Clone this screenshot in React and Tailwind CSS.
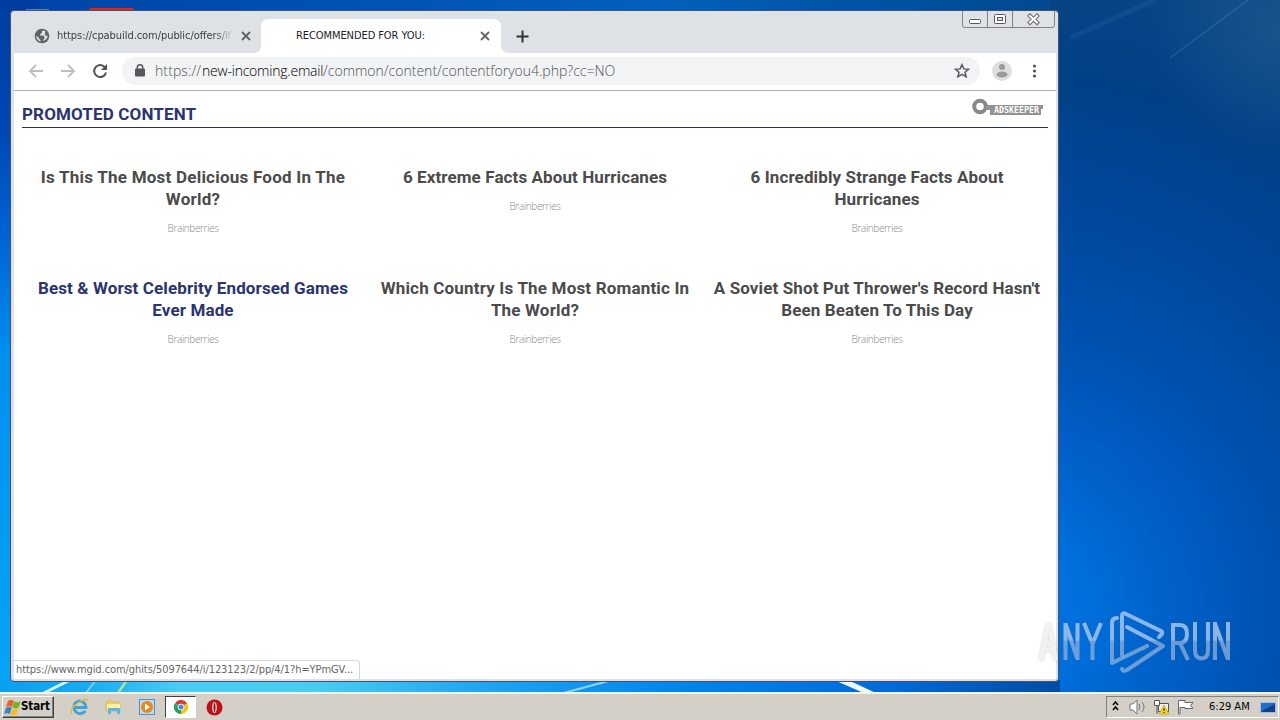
import React from "react";

const TAHOMA = "font-['DejaVu_Sans_Condensed','DejaVu_Sans',sans-serif] [font-stretch:condensed]";

function Wallpaper() {
  return (
    <svg className="absolute inset-0" width="1280" height="720" viewBox="0 0 1280 720">
      <defs>
        <linearGradient id="left" x1="0" y1="0" x2="0" y2="1">
          <stop offset="0" stopColor="#003da0" />
          <stop offset="0.18" stopColor="#0046b4" />
          <stop offset="0.35" stopColor="#0068d8" />
          <stop offset="0.5" stopColor="#0090f0" />
          <stop offset="1" stopColor="#08a6f8" />
        </linearGradient>
        <linearGradient id="top" x1="0" y1="0" x2="1" y2="0">
          <stop offset="0" stopColor="#0044a8" />
          <stop offset="0.5" stopColor="#0060ba" />
          <stop offset="0.82" stopColor="#00488f" />
          <stop offset="1" stopColor="#0d477f" />
        </linearGradient>
        <radialGradient id="right" gradientUnits="userSpaceOnUse" cx="1000" cy="610" r="640">
          <stop offset="0" stopColor="#0078e8" />
          <stop offset="0.14" stopColor="#006edb" />
          <stop offset="0.3" stopColor="#005dc4" />
          <stop offset="0.45" stopColor="#0050ad" />
          <stop offset="0.68" stopColor="#004699" />
          <stop offset="0.84" stopColor="#004085" />
          <stop offset="1" stopColor="#084585" />
        </radialGradient>
        <radialGradient id="corner" gradientUnits="userSpaceOnUse" cx="1280" cy="30" r="130">
          <stop offset="0" stopColor="#2a6696" stopOpacity=".45" />
          <stop offset="1" stopColor="#2a6696" stopOpacity="0" />
        </radialGradient>
        <linearGradient id="bottom" x1="0" y1="0" x2="1" y2="0">
          <stop offset="0" stopColor="#08a0f0" />
          <stop offset="0.08" stopColor="#16acf4" />
          <stop offset="0.17" stopColor="#4accf4" />
          <stop offset="0.3" stopColor="#48cdf2" />
          <stop offset="0.45" stopColor="#20a6f2" />
          <stop offset="0.65" stopColor="#0083ee" />
          <stop offset="0.84" stopColor="#006ada" />
          <stop offset="1" stopColor="#004ca4" />
        </linearGradient>
      </defs>
      <rect width="1280" height="720" fill="url(#left)" />
      <rect x="40" width="1240" height="12" fill="url(#top)" />
      <rect x="1050" width="230" height="720" fill="url(#right)" />
      <rect x="1100" width="180" height="170" fill="url(#corner)" />
      <rect y="680" width="1060" height="14" fill="url(#bottom)" />
      <path d="M1170 58 L1248 0" stroke="#5b93c4" strokeWidth="1.5" opacity=".3" />
      <path d="M1070 38 L1155 0" stroke="#4f8cc4" strokeWidth="5" opacity=".12" />
      <path d="M44 693 L70 680" stroke="#d8f4f0" strokeWidth="3" />
      <path d="M86 693 L96 680" stroke="#8ed9ec" strokeWidth="1.5" />
      <path d="M118 693 L127 680" stroke="#a7e89a" strokeWidth="2.5" />
      <path d="M560 694 L612 680" stroke="#8bd8fb" strokeWidth="2" />
      <path d="M834 680H848L878 694H866Z" fill="#eefaff" />
      <rect x="89" y="8" width="45" height="5" rx="2" fill="#d42a22" />
      <rect x="26" y="9" width="23" height="2" fill="#5680bb" />
    </svg>
  );
}

function CloseX() {
  return (
    <svg width="10" height="10" viewBox="0 0 10 10">
      <path d="M1 1l8 8M9 1L1 9" stroke="#5f6368" strokeWidth="1.8" />
    </svg>
  );
}

function Globe() {
  return (
    <svg className="shrink-0" width="16" height="16" viewBox="0 0 16 16">
      <circle cx="8" cy="8" r="7.3" fill="#5f6368" />
      <path d="M9.5 2.2 8 3.2v1.5L6.2 6v1.6h3l1.5 1.5-.7 1.8L8.6 13c2.8-.4 4.9-2.4 5.1-5.2l-1.5.3-1.5-1.8.8-2.9zM2.3 7.5l2.8 2.4v1l1.5 1v1.6C4 13 2.2 10.9 2.3 7.5z" fill="#dee1e6" />
    </svg>
  );
}

function TabStrip() {
  return (
    <div className="flex h-[42px] bg-[#dee1e6] pl-[11px] pt-[8px]">
      <div className="flex h-[34px] w-[228px] items-center pl-[9px]">
        <Globe />
        <div className={"ml-[7px] h-4 w-[176px] whitespace-nowrap text-[11px] leading-4 tracking-[-0.06px] text-[#3c4043] [mask-image:linear-gradient(to_right,black_90%,transparent)] " + TAHOMA}>
          https://cpabuild.com/public/offers/if
        </div>
        <div className="ml-2 shrink-0"><CloseX /></div>
      </div>
      <div className="relative ml-[8px] h-[34px] w-[240px]">
        <svg className="absolute -left-2 top-0" width="256" height="34" viewBox="0 0 256 34">
          <path d="M0 34q8 0 8-8V8q0-8 8-8h224q8 0 8 8v18q0 8 8 8z" fill="#fff" />
        </svg>
        <div className="relative flex h-full items-center pl-[35px]">
          <span className={"w-[176px] whitespace-nowrap text-[11px] tracking-[-0.08px] text-[#202124] " + TAHOMA}>RECOMMENDED FOR YOU:</span>
          <span className="ml-[8px]"><CloseX /></span>
        </div>
      </div>
      <svg className="ml-[15px] mt-[11px]" width="13" height="13" viewBox="0 0 13 13">
        <path d="M6.5 .5v12M.5 6.5h12" stroke="#303338" strokeWidth="2" />
      </svg>
    </div>
  );
}

function WindowButtons() {
  return (
    <svg className="absolute left-[950px] top-0" width="96" height="19" viewBox="0 0 96 19">
      <path d="M1.5 0v14q0 2.5 2.5 2.5h87q2.5 0 2.5-2.5V0M26.500 0v16M51.500 0v16" fill="none" stroke="#80838e" />
      <rect x="8.500" y="8.500" width="11" height="4" rx="1" fill="#fff" stroke="#555966" />
      <rect x="33.500" y="3.500" width="11" height="9" rx="1" fill="#fff" stroke="#555966" />
      <rect x="36.500" y="6.500" width="5" height="3" fill="#dee1e6" stroke="#555966" />
      <path d="M67.500 3.500l10 9.500M77.500 3.500l-10 9.500" stroke="#60646f" strokeWidth="4" />
      <path d="M68.200 4.200l8.600 8.100M76.800 4.200l-8.600 8.100" stroke="#fff" strokeWidth="2.200" />
    </svg>
  );
}

function Toolbar() {
  return (
    <div className="flex h-[38px] items-center border-b border-[#adb0b2] bg-white pb-[2px] pl-[14px]">
      <svg width="80" height="16" viewBox="0 0 80 16" fill="none">
        <path d="M15 8H2M8 2L2 8l6 6M33 8h13M40 2l6 6-6 6" stroke="#bcbec1" strokeWidth="1.8" />
        <path d="M76.800 4.200A6 6 0 1 0 78 9.500" stroke="#4f5357" strokeWidth="2" />
        <path d="M79 1v6h-6z" fill="#4f5357" />
      </svg>
      <div className="ml-[14px] flex h-7 w-[858px] items-center rounded-full bg-[#f1f3f4] pl-[13px]">
        <svg width="10" height="13" viewBox="0 0 10 13">
          <path d="M2.300 5.500V3.500a2.700 2.700 0 0 1 5.400 0v2" fill="none" stroke="#55595d" strokeWidth="1.500" />
          <rect y="4.500" width="10" height="8" rx="1" fill="#55595d" />
        </svg>
        <div className="ml-[10px] flex w-[790px] whitespace-nowrap font-['Open_Sans',sans-serif] text-[14px] font-light leading-5 text-[#50545a]">
          <span className="w-[47px] tracking-[0.1px]">https://</span>
          <span className="w-[121px] tracking-[-0.22px] text-black">new-incoming.email</span>
          <span className="tracking-[0px]">/common/content/contentforyou4.php?cc=NO</span>
        </div>
        <svg className="ml-[9px]" width="16" height="16" viewBox="0 0 16 16">
          <path d="M8 1.700l1.900 4.200 4.600.4-3.500 3 1.100 4.500L8 11.400l-4.100 2.400L5 9.300l-3.500-3 4.600-.4z" fill="none" stroke="#53575b" strokeWidth="1.500" />
        </svg>
      </div>
      <svg className="ml-[12px]" width="20" height="20" viewBox="0 0 20 20">
        <circle cx="10" cy="10" r="10" fill="#dedede" />
        <circle cx="10" cy="6" r="3" fill="#9a9a9a" />
        <ellipse cx="10" cy="13.500" rx="5.500" ry="3" fill="#9a9a9a" />
      </svg>
      <svg className="ml-[20px]" width="5" height="14" viewBox="0 0 5 14" fill="#4f5357">
        <circle cx="2.500" cy="2" r="1.600" /><circle cx="2.500" cy="7" r="1.600" /><circle cx="2.500" cy="12" r="1.600" />
      </svg>
    </div>
  );
}

const ARTICLES = [
  { lines: ["Is This The Most Delicious Food In The", "World?"], tracking: "tracking-[0.23px]" },
  { lines: ["6 Extreme Facts About Hurricanes"], tracking: "tracking-[0.1px]" },
  { lines: ["6 Incredibly Strange Facts About", "Hurricanes"], tracking: "tracking-[0.13px]" },
  { lines: ["Best & Worst Celebrity Endorsed Games", "Ever Made"], tracking: "tracking-[0.12px]", active: true },
  { lines: ["Which Country Is The Most Romantic In", "The World?"], tracking: "tracking-[0.18px]" },
  { lines: ["A Soviet Shot Put Thrower's Record Hasn't", "Been Beaten To This Day"], tracking: "tracking-[0.12px]" },
];

function Content() {
  return (
    <div className="relative h-[588px] bg-white px-2">
      <div className="flex h-[37px] items-start justify-between border-b border-[#2b3159]">
        <h1 className="mt-[13px] font-[Roboto,sans-serif] text-[17px] font-bold leading-5 tracking-[0.14px] text-[#2a3470]">PROMOTED CONTENT</h1>
        <svg className="mr-[4px] mt-[6px]" width="73" height="19" viewBox="0 0 73 19">
          <circle cx="9" cy="9.500" r="5.800" fill="none" stroke="#888" strokeWidth="4" />
          <path d="M15 8h57v4h-2v6H19v-5h-4z" fill="#929292" />
          <text x="23" y="16" fontFamily="DejaVu Sans Mono" fontWeight="bold" fontSize="8" fill="#fff" textLength="45" lengthAdjust="spacingAndGlyphs">ADSKEEPER</text>
        </svg>
      </div>
      <div className="grid grid-cols-3 pt-[38px]">
        {ARTICLES.map((a) => (
          <article key={a.lines[0]} className="h-[111px] text-center">
            <h2 className={"whitespace-nowrap font-[Roboto,sans-serif] text-[17px] font-bold leading-[22px] " + a.tracking + (a.active ? " text-[#2a3470]" : " text-[#4b4b4b]")}>
              {a.lines.map((l) => <span key={l} className="block">{l}</span>)}
            </h2>
            <p className="mt-[12px] font-['Open_Sans',sans-serif] text-[10px] font-light leading-3 tracking-[-0.36px] text-[#888]">Brainberries</p>
          </article>
        ))}
      </div>
      <div className={"absolute bottom-0 left-0 h-[19px] w-[346px] whitespace-nowrap rounded-tr border-r border-t border-[#d5d6d8] bg-white pl-[2px] text-[11px] leading-[18px] tracking-[-0.08px] text-[#666] " + TAHOMA}>
        https://www.mgid.com/ghits/5097644/i/123123/2/pp/4/1?h=YPmGV...
      </div>
    </div>
  );
}

function Watermark() {
  return (
    <svg className="absolute left-[1030px] top-[600px]" width="210" height="80" viewBox="0 0 210 80">
      <defs>
        <linearGradient id="mark" gradientUnits="userSpaceOnUse" x1="0" y1="0" x2="0" y2="80">
          <stop offset="0.500" stopColor="#9cc4f2" stopOpacity=".85" />
          <stop offset="0.520" stopColor="#8fb5e3" stopOpacity=".7" />
        </linearGradient>
        <filter id="glow"><feDropShadow dx="0" dy="0" stdDeviation="1.500" floodColor="#444" floodOpacity=".3" /></filter>
      </defs>
      <g fill="none" stroke="url(#mark)" strokeWidth="4" filter="url(#glow)">
        <path d="M11 60L18.500 24L26 60M13.500 49h10" stroke="#f1f1f1" />
        <path d="M35.500 60V23M47.500 23V60M36 25L47 58M54 23L62.500 44L71 23M62.500 43V60" />
        <path d="M87 18q-5 0-5 5V63L117 46" strokeLinejoin="round" strokeLinecap="round" />
        <path d="M92 55V16q0-4 4-2L131 31q3 2-2 6M97 27L133 46L97 70q-4 2-5-1" strokeLinejoin="round" strokeLinecap="round" />
        <path d="M143 60V25h7q7 0 7 9t-7 9h-7M150 43l8 17M165 22v28q0 8.500 6.500 8.500t6.500-8.500V22M185 60V22M198 22V60M185.500 25L197.500 58" />
      </g>
    </svg>
  );
}

function Taskbar() {
  return (
    <footer className="absolute inset-x-0 bottom-0 flex h-7 border-t-2 border-[#f5f3ee] bg-[#d4d0c8] pt-[2px]">
      <div className={"ml-[2px] flex h-[22px] w-[52px] items-center border border-b-[#404040] border-l-white border-r-[#404040] border-t-white pl-px shadow-[inset_-1px_-1px_#808080] " + TAHOMA}>
        <svg className="shrink-0" width="17" height="17" viewBox="0 0 17 17">
          <path d="M4 2q3-2 6 0L8 8q-3-1.500-6 0z" fill="#e56229" />
          <path d="M10.300 2.500q3 1.500 6.500 0L14.500 9q-3 1-6-.500z" fill="#75b12a" />
          <path d="M2 8.700q3-1.500 5.700 0L5.700 15q-3-1.500-5.700 0z" fill="#3b7fd0" />
          <path d="M8.300 9.500q3 1.500 6 .5L12.300 16q-3 1-6-.500z" fill="#f6bf27" />
        </svg>
        <span className="text-[11.500px] font-bold tracking-[-0.1px] text-black">Start</span>
      </div>
      <svg className="ml-[16px] mt-[2px]" width="20" height="18" viewBox="0 0 20 18" fill="none">
        <path d="M15.500 13Q13 16 9 15.500 4 14 4 9t5.500-6q6 .5 6.500 6.500H5" stroke="#3ba4dc" strokeWidth="2.800" />
        <path d="M2 16Q-1 11 8 5 17-1 18 3" stroke="#e9b92e" strokeWidth="1.500" />
      </svg>
      <svg className="ml-[15px] mt-[2px]" width="18" height="18" viewBox="0 0 18 18">
        <path d="M1 4l5-2 2 2h7v9H1z" fill="#e9cd64" stroke="#c8a83c" strokeWidth=".5" />
        <path d="M2 6h13v6H2z" fill="#fff0a5" />
        <path d="M3 16v-6h12v6h-3v-3H6v3z" fill="#65b4df" />
      </svg>
      <svg className="ml-[16px] mt-[3px]" width="17" height="17" viewBox="0 0 17 17">
        <rect x=".500" y=".500" width="15" height="15" fill="#b9dcf2" stroke="#4d94c8" />
        <circle cx="8" cy="8" r="6" fill="#ee8517" /><path d="M6 4.500v7l5-3.500z" fill="#fff" />
      </svg>
      <div className="ml-[9px] flex h-[22px] w-[31px] items-center justify-center border border-b-white border-l-[#404040] border-r-white border-t-[#404040] bg-white">
        <svg width="14" height="14" viewBox="0 0 14 14">
          <path d="M7 7L.900 3.500A7 7 0 0 1 13.100 3.500z" fill="#e0392e" />
          <path d="M7 7h0l6.100-3.500A7 7 0 0 1 7 14z" fill="#f9c515" />
          <path d="M7 7v0L7 14A7 7 0 0 1 .900 3.500z" fill="#24a152" />
          <circle cx="7" cy="7" r="3.300" fill="#fff" /><circle cx="7" cy="7" r="2.500" fill="#4484ee" />
        </svg>
      </div>
      <svg className="ml-[10px] mt-[3px]" width="17" height="17" viewBox="0 0 17 17">
        <circle cx="8.500" cy="8.500" r="8" fill="#bd1119" /><ellipse cx="8.500" cy="8.500" rx="2.300" ry="5.500" fill="#f6e5e2" /><ellipse cx="8.500" cy="8.500" rx="1" ry="4.500" fill="#8d1017" />
      </svg>
      <div className={"ml-auto mr-px flex h-[22px] w-[173px] items-center border border-b-white border-l-[#808080] border-r-white border-t-[#808080] text-[11px] text-black " + TAHOMA}>
        <svg width="92" height="18" viewBox="0 0 92 18">
          <path d="M6 7l2.500-3L11 7M6 12l2.500-3L11 12" fill="none" stroke="#000" strokeWidth="1.500" />
          <path d="M23 6h3l4-4v14l-4-4h-3z" fill="#fff" stroke="#777" />
          <path d="M32 6q2 3 0 6M35 4q4 5 0 10" fill="none" stroke="#777" />
          <path d="M51.500 5.500h10v8h-10z" fill="#eee" stroke="#555" /><path d="M47.500 2.500h5v5h-5zM50 8v8" fill="#fff" stroke="#555" />
          <path d="M57 7l5 9H52z" fill="#ffd61e" stroke="#ad8500" strokeWidth=".5" /><path d="M57 10v3M57 14v1" stroke="#000" />
          <path d="M71.500 16V2.500H78v2h8l-2.500 3 2.500 3h-8v-1h-5V16z" fill="#fff" stroke="#666" />
        </svg>
        <span className="ml-[10px] w-[43px] whitespace-nowrap tracking-[0px]">6:29 AM</span>
        <svg className="ml-[8px]" width="17" height="15" viewBox="0 0 17 15">
          <rect x=".500" y="2.500" width="15" height="10" fill="#256cc7" stroke="#9cc1e4" /><path d="M2 11L15 4v8H2z" fill="#123f85" />
        </svg>
      </div>
    </footer>
  );
}

export default function App() {
  return (
    <main className="relative h-[720px] w-[1280px] overflow-hidden">
      <Wallpaper />
      <section className="absolute left-[10px] top-[10px] h-[672px] w-[1049px] overflow-hidden rounded-[4px] border border-[#41546c] bg-[#dee1e6] pl-[3px] pr-[2px] pt-0">
        <TabStrip />
        <Toolbar />
        <Content />
        <WindowButtons />
      </section>
      <Watermark />
      <Taskbar />
    </main>
  );
}
